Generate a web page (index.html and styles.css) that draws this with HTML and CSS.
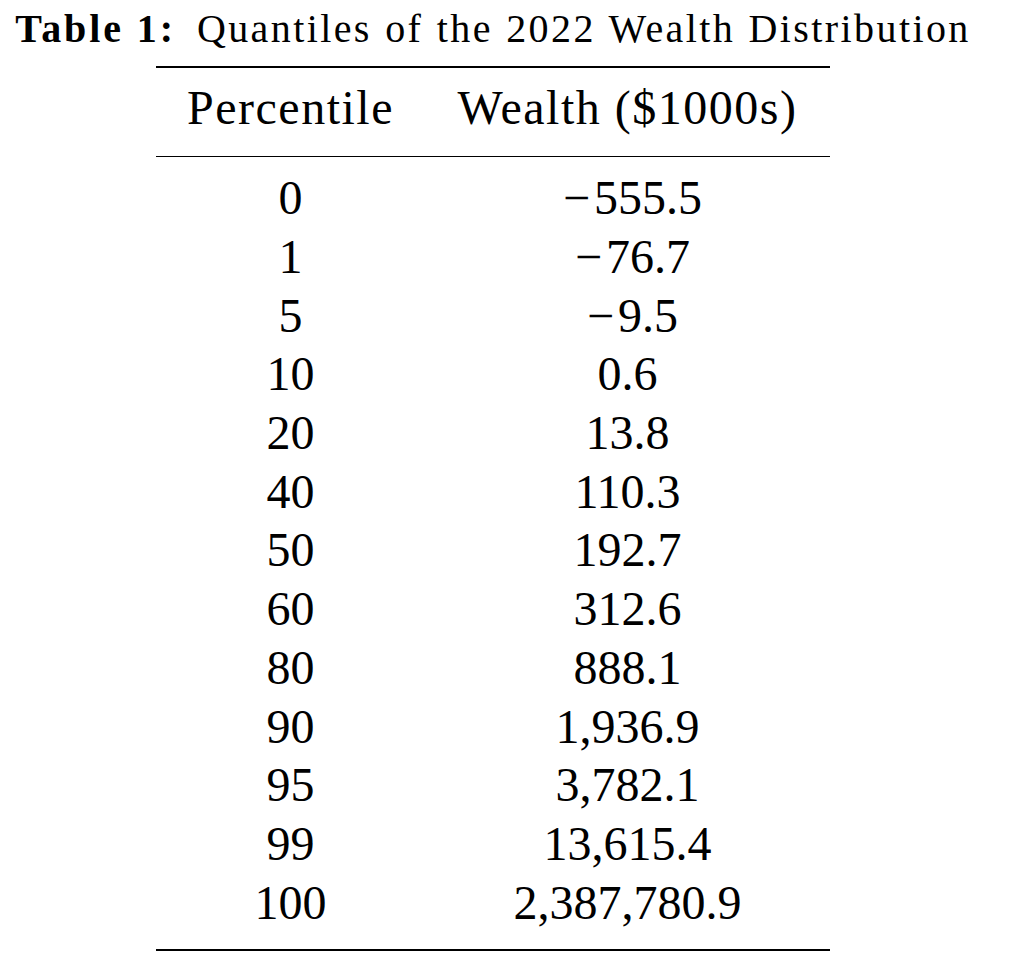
FILE: index.html
```html
<!DOCTYPE html>
<html lang="en">
<head>
<meta charset="utf-8">
<title>Table 1: Quantiles of the 2022 Wealth Distribution</title>
<link rel="stylesheet" href="styles.css">
</head>
<body>
<div class="page">
  <p class="caption"><span class="label">Table 1:</span><span class="title">Quantiles of the 2022 Wealth Distribution</span></p>
  <div class="tbl">
    <div class="rule heavy"></div>
    <div class="row head">
      <div class="cell">Percentile</div>
      <div class="cell">Wealth ($1000s)</div>
    </div>
    <div class="rule light"></div>
    <div class="body">
      <div class="row"><div class="cell">0</div><div class="cell"><span class="minus">&minus;</span>555.5</div></div>
      <div class="row"><div class="cell">1</div><div class="cell"><span class="minus">&minus;</span>76.7</div></div>
      <div class="row"><div class="cell">5</div><div class="cell"><span class="minus">&minus;</span>9.5</div></div>
      <div class="row"><div class="cell">10</div><div class="cell">0.6</div></div>
      <div class="row"><div class="cell">20</div><div class="cell">13.8</div></div>
      <div class="row"><div class="cell">40</div><div class="cell">110.3</div></div>
      <div class="row"><div class="cell">50</div><div class="cell">192.7</div></div>
      <div class="row"><div class="cell">60</div><div class="cell">312.6</div></div>
      <div class="row"><div class="cell">80</div><div class="cell">888.1</div></div>
      <div class="row"><div class="cell">90</div><div class="cell">1,936.9</div></div>
      <div class="row"><div class="cell">95</div><div class="cell">3,782.1</div></div>
      <div class="row"><div class="cell">99</div><div class="cell">13,615.4</div></div>
      <div class="row"><div class="cell">100</div><div class="cell">2,387,780.9</div></div>
    </div>
    <div class="rule heavy bottom"></div>
  </div>
</div>
</body>
</html>
```
FILE: styles.css
```css
html, body {
  margin: 0;
  padding: 0;
  background: #ffffff;
}

body {
  font-family: "Liberation Serif", "Times New Roman", serif;
  color: #000000;
}

.page {
  width: 986px;
  display: flex;
  flex-direction: column;
  align-items: center;
}

.caption {
  margin: 0;
  padding-top: 4px;
  font-size: 40px;
  line-height: 50px;
  white-space: nowrap;
  display: flex;
  gap: 21px;
}

.label {
  font-weight: bold;
  letter-spacing: 2.9px;
}

.title {
  letter-spacing: 2.4px;
  word-spacing: 1px;
}

.tbl {
  margin-top: 12px;
  width: 674px;
  display: flex;
  flex-direction: column;
}

.rule {
  background: #000000;
}

.rule.heavy {
  height: 2px;
}

.rule.light {
  height: 1.5px;
  margin-top: 18px;
}

.rule.bottom {
  margin-top: 17px;
}

.row {
  display: grid;
  grid-template-columns: 269px 405px;
  font-size: 48px;
  line-height: 58.7px;
}

.head {
  margin-top: 11px;
  letter-spacing: 1.5px;
}

.body {
  margin-top: 12px;
  display: flex;
  flex-direction: column;
}

.cell {
  text-align: center;
  white-space: nowrap;
}

.minus {
  margin-right: 4px;
  margin-left: 10px;
}
```
